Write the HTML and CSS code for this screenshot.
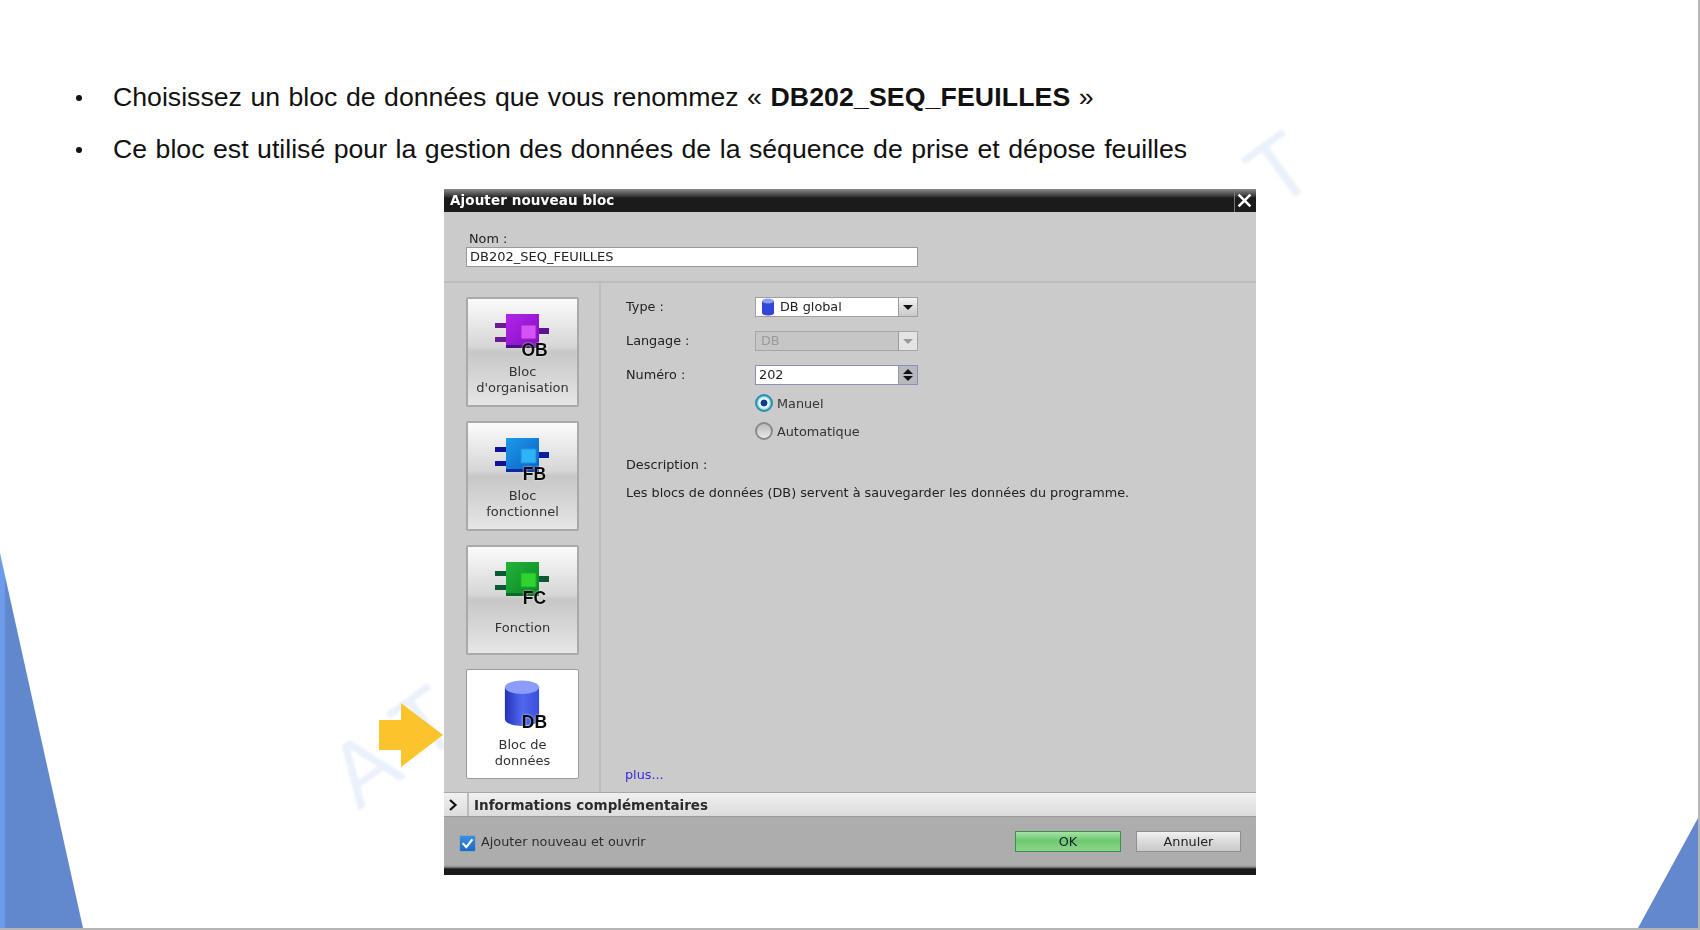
FILE: index.html
```html
<!DOCTYPE html>
<html lang="fr">
<head>
<meta charset="utf-8">
<title>Ajouter nouveau bloc</title>
<link rel="stylesheet" href="styles.css">
</head>
<body>
<main class="slide">
  <svg class="tri tri-left" viewBox="0 0 83 375" aria-hidden="true">
    <defs><linearGradient id="lg" x1="0" x2="1" y1="0" y2="0"><stop offset="0" stop-color="#6e9cec"/><stop offset=".05" stop-color="#6e9cec"/><stop offset=".07" stop-color="#6187cd"/><stop offset="1" stop-color="#6388ce"/></linearGradient></defs>
    <polygon points="0,0 83,375 0,375" fill="url(#lg)"/>
  </svg>
  <svg class="tri tri-right" viewBox="0 0 60 110" aria-hidden="true"><polygon points="60,0 60,110 0,110" fill="#6388ce"/></svg>
  <span class="wm wm-left">A T</span>
  <span class="wm wm-right">T</span>

  <ul class="bullets">
    <li>Choisissez un bloc de données que vous renommez « <b>DB202_SEQ_FEUILLES</b> »</li>
    <li>Ce bloc est utilisé pour la gestion des données de la séquence de prise et dépose feuilles</li>
  </ul>

  <div class="stage">
    <svg class="arrow" viewBox="0 0 64 64" aria-hidden="true"><polygon points="0,17 22,17 22,0 64,32 22,64 22,47 0,47" fill="#fcc42c"/></svg>
    <section class="dialog">
      <header class="titlebar">
        <span class="title">Ajouter nouveau bloc</span>
        <span class="close"><svg viewBox="0 0 14 14" width="15" height="15"><path d="M1.5 1.5 12.5 12.5M12.5 1.5 1.5 12.5" stroke="#fff" stroke-width="2.4"/></svg></span>
      </header>
      <div class="name-row">
        <label class="name-label">Nom :</label>
        <div class="field name-field">DB202_SEQ_FEUILLES</div>
      </div>
      <div class="body">
        <nav class="blocks">
          <div class="block">
            <svg class="block-icon" viewBox="0 0 56 48"><defs><linearGradient id="ob" x1="0" x2="1" y1="0" y2="1"><stop offset="0" stop-color="#b524ea"/><stop offset="1" stop-color="#7c10c4"/></linearGradient></defs>
              <rect x="0" y="9" width="12" height="5" fill="#6d1a95"/><rect x="0" y="23" width="12" height="5" fill="#6d1a95"/><rect x="43" y="14" width="11" height="6" fill="#5d1390"/>
              <rect x="11" y="0" width="33" height="32" fill="url(#ob)"/><rect x="11" y="31" width="33" height="3" fill="#4a0e85"/><rect x="26" y="11" width="15" height="14" fill="#d552f5" stroke="#a21fcc"/>
            </svg>
            <span class="badge">OB</span>
            <span class="block-name">Bloc<br>d'organisation</span>
          </div>
          <div class="block">
            <svg class="block-icon" viewBox="0 0 56 48"><defs><linearGradient id="fb" x1="0" x2="1" y1="0" y2="1"><stop offset="0" stop-color="#1c9be8"/><stop offset="1" stop-color="#0d5fc4"/></linearGradient></defs>
              <rect x="0" y="9" width="12" height="5" fill="#11119a"/><rect x="0" y="23" width="12" height="5" fill="#11119a"/><rect x="43" y="14" width="11" height="6" fill="#0b1f9c"/>
              <rect x="11" y="0" width="33" height="32" fill="url(#fb)"/><rect x="11" y="31" width="33" height="3" fill="#0a2ca0"/><rect x="26" y="11" width="15" height="14" fill="#2fb3f7" stroke="#1b8fdc"/>
            </svg>
            <span class="badge">FB</span>
            <span class="block-name">Bloc<br>fonctionnel</span>
          </div>
          <div class="block">
            <svg class="block-icon" viewBox="0 0 56 48"><defs><linearGradient id="fc" x1="0" x2="1" y1="0" y2="1"><stop offset="0" stop-color="#22b43a"/><stop offset="1" stop-color="#0d8526"/></linearGradient></defs>
              <rect x="0" y="9" width="12" height="5" fill="#0b5a35"/><rect x="0" y="23" width="12" height="5" fill="#0b5a35"/><rect x="43" y="14" width="11" height="6" fill="#0b5a35"/>
              <rect x="11" y="0" width="33" height="32" fill="url(#fc)"/><rect x="11" y="31" width="33" height="3" fill="#0a6b2a"/><rect x="26" y="11" width="15" height="14" fill="#2fd42f" stroke="#1fae2f"/>
            </svg>
            <span class="badge">FC</span>
            <span class="block-name block-name-single">Fonction</span>
          </div>
          <div class="block block-active">
            <svg class="block-icon block-icon-db" viewBox="0 0 40 52"><defs><linearGradient id="db" x1="0" x2="1" y1="0" y2="0"><stop offset="0" stop-color="#2433b8"/><stop offset=".5" stop-color="#4f68ee"/><stop offset="1" stop-color="#3a4fdc"/></linearGradient></defs>
              <path d="M1 8V43C1 48 9 51 20 51S39 48 39 43V8Z" fill="url(#db)"/><ellipse cx="20" cy="8" rx="19" ry="7.5" fill="#8c9cfa"/>
            </svg>
            <span class="badge">DB</span>
            <span class="block-name">Bloc de<br>données</span>
          </div>
        </nav>
        <div class="props">
          <div class="prop"><span class="prop-label">Type :</span>
            <div class="combo"><span class="combo-text"><svg class="mini-db" viewBox="0 0 14 18"><path d="M1 3V15C1 16.5 3.5 17.5 7 17.5S13 16.5 13 15V3Z" fill="#3346d8"/><ellipse cx="7" cy="3" rx="6" ry="2.5" fill="#8c9cfa"/></svg>DB global</span><span class="combo-btn"><i class="down"></i></span></div>
          </div>
          <div class="prop"><span class="prop-label">Langage :</span>
            <div class="combo combo-off"><span class="combo-text">DB</span><span class="combo-btn"><i class="down"></i></span></div>
          </div>
          <div class="prop"><span class="prop-label">Numéro :</span>
            <div class="combo combo-num"><span class="combo-text">202</span><span class="spin"><i class="up"></i><i class="down"></i></span></div>
          </div>
          <div class="radios">
            <div class="radio-row"><span class="radio radio-on"></span>Manuel</div>
            <div class="radio-row"><span class="radio"></span>Automatique</div>
          </div>
          <div class="desc-label">Description :</div>
          <p class="desc">Les blocs de données (DB) servent à sauvegarder les données du programme.</p>
          <a class="more">plus...</a>
        </div>
      </div>
      <div class="infobar">
        <span class="chev"><svg viewBox="0 0 10 12" width="10" height="12"><path d="M2 1 7.5 6 2 11" fill="none" stroke="#111" stroke-width="2.2"/></svg></span>
        <span class="info-text">Informations complémentaires</span>
      </div>
      <footer class="footer">
        <div class="check-row"><span class="check"><svg viewBox="0 0 16 16" width="13" height="13"><path d="M2 7.5 6.5 12.5 14 3" fill="none" stroke="#fff" stroke-width="2.6"/></svg></span>Ajouter nouveau et ouvrir</div>
        <div class="actions"><span class="btn btn-ok">OK</span><span class="btn">Annuler</span></div>
      </footer>
    </section>
  </div>
</main>
</body>
</html>
```
FILE: styles.css
```css
* { box-sizing: border-box; }
html, body { margin: 0; height: 100%; }
body { background: #fff; overflow: hidden; }

.slide {
  position: relative;
  width: 1700px;
  height: 930px;
  background: #fff;
  border-right: 2px solid #b5b5b5;
  border-bottom: 2px solid #b5b5b5;
  overflow: hidden;
  font-family: "DejaVu Sans", sans-serif;
}
.tri { position: absolute; bottom: 0; display: block; }
.tri-left { left: 0; width: 83px; height: 375px; }
.tri-right { right: 0; width: 60px; height: 110px; }
.wm {
  position: absolute;
  font: 400 90px/90px "Liberation Sans", sans-serif;
  color: #eaf1fa;
  white-space: nowrap;
  transform-origin: 0 76px;
  transform: rotate(-36deg);
  filter: blur(1.2px);
}
.wm-left { left: 358px; top: 735px; }
.wm-right { left: 1276px; top: 135px; }

.bullets {
  position: relative;
  list-style: none;
  margin: 0;
  padding: 71px 0 0 113px;
  font: 26.67px/52px "Liberation Sans", Arial, sans-serif;
  word-spacing: 1.1px;
  color: #111;
}
.bullets li { position: relative; height: 52px; white-space: nowrap; }
.bullets li::before {
  content: "";
  position: absolute;
  left: -37px;
  top: 24px;
  width: 6px;
  height: 6px;
  border-radius: 50%;
  background: #111;
}
.bullets b { font-weight: 700; letter-spacing: .12px; }

.stage { position: relative; margin: 14px 0 0 444px; width: 812px; }
.arrow { position: absolute; left: -65px; top: 514px; width: 64px; height: 64px; }

.dialog {
  position: relative;
  width: 812px;
  height: 686px;
  display: flex;
  flex-direction: column;
  background: #cbcbcb;
  color: #222;
  font-size: 12.8px;
  filter: blur(.35px);
}
.titlebar {
  height: 23px;
  flex: none;
  display: flex;
  justify-content: space-between;
  background: linear-gradient(#8a8a8a 0, #3a3a3a 7px, #1b1b1b 9px, #1b1b1b 100%);
  color: #fff;
}
.title { padding: 3px 0 0 6px; font-weight: 700; font-size: 13.5px; letter-spacing: .1px; }
.close { width: 22px; display: flex; align-items: center; justify-content: center; border-left: 1px solid #777; padding-right: 2px; }

.name-row { height: 71px; flex: none; padding: 19px 0 0 22px; border-bottom: 2px solid #bdbdbd; position: relative; }
.name-label { display: block; padding-left: 3px; height: 16px; line-height: 16px; }
.field { height: 20px; line-height: 18px; background: #fff; }
.name-field { width: 452px; padding-left: 3px; border: 1px solid #999; font-size: 13px; }

.body { flex: 1; display: flex; min-height: 0; }
.blocks { width: 157px; flex: none; padding: 14px 0 0 22px; border-right: 2px solid #bdbdbd; display: flex; flex-direction: column; gap: 14px; }
.block {
  position: relative;
  width: 113px;
  height: 110px;
  flex: none;
  border: 2px solid #a9a9a9;
  border-radius: 2px;
  background: linear-gradient(#fbfbfb 0, #d6d6d6 45%, #c7c7c7 50%, #e6e6e6 100%);
  text-align: center;
  color: #333;
}
.block-active { background: #fff; border-width: 1px; border-color: #9a9a9a; }
.block-icon { position: absolute; left: 27px; top: 15px; width: 56px; height: 48px; }
.block-icon-db { left: 37px; top: 10px; width: 36px; height: 47px; }
.badge {
  position: absolute;
  left: 51px;
  top: 41px;
  width: 31px;
  height: 20px;
  font: 700 17.5px/20px "Liberation Sans", sans-serif;
  color: #0a0a0a;
  text-align: center;
  text-shadow: 0 0 2px #fff;
}
.block-active .badge { left: 52px; top: 42px; }
.block-name { position: absolute; left: 0; right: 0; top: 65px; line-height: 16px; font-size: 13px; }
.block-name-single { top: 73px; }
.block-active .block-name { top: 67px; }

.props { flex: 1; position: relative; padding: 14px 0 0 25px; }
.prop { display: flex; height: 34px; }
.prop-label { width: 129px; padding-top: 2px; line-height: 16px; }
.combo { width: 163px; height: 20px; display: flex; background: #fff; border: 1px solid #a0a0a0; line-height: 18px; }
.combo-text { flex: 1; display: flex; align-items: center; gap: 5px; padding-left: 5px; }
.mini-db { width: 14px; height: 18px; }
.combo-btn, .spin { width: 19px; flex: none; border-left: 1px solid #999; background: linear-gradient(#f4f4f4, #c9c9c9); display: flex; flex-direction: column; align-items: center; justify-content: center; gap: 2px; }
.down { width: 0; height: 0; border-left: 5px solid transparent; border-right: 5px solid transparent; border-top: 5px solid #111; }
.up { width: 0; height: 0; border-left: 5px solid transparent; border-right: 5px solid transparent; border-bottom: 5px solid #111; }
.combo-off { background: #c6c6c6; border-color: #a6a6a6; color: #9a9a9a; }
.combo-off .combo-btn { background: #e4e4e4; }
.combo-off .down { border-top-color: #999; }
.combo-num { border-color: #8d8fb4; }
.combo-num .combo-text { padding-left: 3px; }
.spin { background: #b8b8c0; }

.radios { margin: -10px 0 0 129px; }
.radio-row { height: 28px; display: flex; align-items: center; gap: 4px; color: #333; }
.radio { width: 18px; height: 18px; border-radius: 50%; border: 2px solid #8a8a8a; background: linear-gradient(#bbb, #e8e8e8); flex: none; }
.radio-on { border-color: #2f8fa8; background: radial-gradient(circle, #143c86 0 3px, #dff4fb 3.8px 5px, #6cc8e4 7px); }
.desc-label { margin-top: 12px; line-height: 16px; }
.desc { margin: 12px 0 0; line-height: 16px; white-space: nowrap; }
.more { position: absolute; left: 24px; bottom: 9px; line-height: 16px; color: #3b2bd8; }

.infobar { height: 25px; flex: none; display: flex; align-items: center; background: linear-gradient(#f0f0f0, #e6e6e6 50%, #dcdcdc); border-top: 1px solid #a8a8a8; border-bottom: 1px solid #999; }
.chev { width: 25px; padding-right: 6px; align-self: stretch; display: flex; align-items: center; justify-content: center; border-right: 2px solid #bcbcbc; }
.info-text { padding-left: 5px; font-weight: 700; font-size: 13.5px; color: #2b2b2b; }

.footer { height: 58px; flex: none; display: flex; justify-content: space-between; align-items: flex-start; padding: 14px 15px 0 15px; background: linear-gradient(#adadad 0, #adadad 48px, #8d8d8d 50px, #1a1a1a 52px, #1a1a1a 100%); }
.check-row { display: flex; align-items: center; gap: 5px; height: 21px; color: #2e2e2e; }
.check { width: 17px; height: 17px; flex: none; margin-top: 4px; background: linear-gradient(#3a8fe0, #1f69c4); border: 1px solid #8fa6b8; border-radius: 2px; display: flex; align-items: center; justify-content: center; }
.actions { display: flex; gap: 15px; }
.btn { width: 105px; height: 21px; line-height: 19px; text-align: center; border: 1px solid #8f8f8f; background: linear-gradient(#f2f2f2, #dcdcdc 45%, #c9c9c9); color: #222; }
.btn-ok { width: 106px; border-color: #3f8f4a; background: linear-gradient(#a7e2a5, #6dc96d 45%, #8fd48f); color: #123; }
```
